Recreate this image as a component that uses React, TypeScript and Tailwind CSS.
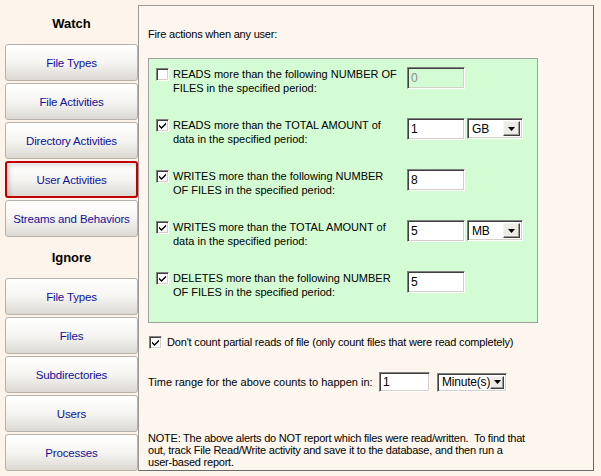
import React from "react";

const Check = () => (
  <svg width="9" height="9" viewBox="0 0 9 9" className="block">
    <path d="M1 3.5 L3.5 6 L8 1.5 L8 3.5 L3.5 8 L1 5.5 Z" fill="#000" />
  </svg>
);

const CheckBox = ({ checked }: { checked: boolean }) => (
  <div className="w-[13px] h-[13px] shrink-0 bg-white border border-t-[#808080] border-l-[#808080] border-b-white border-r-white shadow-[inset_1px_1px_0_#404040,inset_-1px_-1px_0_#d4d0c8] flex items-center justify-center">
    {checked && <Check />}
  </div>
);

const TextBox = ({ value, disabled, w, h }: { value: string; disabled?: boolean; w: string; h: string }) => (
  <div
    className={`${w} ${h} shrink-0 border border-t-[#808080] border-l-[#808080] border-b-white border-r-white shadow-[inset_1px_1px_0_#404040,inset_-1px_-1px_0_#d4d0c8] flex items-center pl-[3px] text-[12px] ${
      disabled ? "bg-[#d4fcd4] text-[#8a8a8a]" : "bg-white text-black"
    }`}
  >
    {value}
  </div>
);

const Combo = ({ value, w, h }: { value: string; w: string; h: string }) => (
  <div
    className={`${w} ${h} shrink-0 bg-white border border-t-[#808080] border-l-[#808080] border-b-white border-r-white shadow-[inset_1px_1px_0_#404040,inset_-1px_-1px_0_#d4d0c8] flex items-stretch p-[2px]`}
  >
    <div className="flex-1 flex items-center pl-[2px] text-[12px] tracking-[-0.2px] text-black">{value}</div>
    <div className="w-[17px] bg-[#ecebe6] border border-t-[#f4f4f4] border-l-[#f4f4f4] border-b-[#404040] border-r-[#404040] shadow-[inset_-1px_-1px_0_#9a9a9a] flex items-center justify-center">
      <svg width="7" height="4" viewBox="0 0 7 4" className="block">
        <path d="M0 0 H7 L3.5 4 Z" fill="#000" />
      </svg>
    </div>
  </div>
);

const NavButton = ({ label, selected }: { label: string; selected?: boolean }) => (
  <div
    className={`h-[37px] w-[133px] rounded-[3px] flex items-center justify-center pt-[2px] text-[11.5px] tracking-[-0.15px] text-[#10109a] bg-gradient-to-b from-white via-[#f6f5f2] to-[#dcd9d3] ${
      selected
        ? "border-2 border-[#c00000] shadow-[inset_3px_3px_4px_rgba(0,0,0,0.12)]"
        : "border border-[#b6b2aa]"
    }`}
  >
    {label}
  </div>
);

const Row = ({
  checked,
  l1,
  l2,
  value,
  disabled,
  unit,
}: {
  checked: boolean;
  l1: string;
  l2: string;
  value: string;
  disabled?: boolean;
  unit?: string;
}) => (
  <div className="h-[52px] flex items-start">
    <div className="mt-[1px]">
      <CheckBox checked={checked} />
    </div>
    <div className="ml-[4px] w-[234px] leading-[14px] text-[11px] text-black">
      {l1}
      <br />
      {l2}
    </div>
    <TextBox value={value} disabled={disabled} w="w-[58px]" h="h-[22px]" />
    {unit && (
      <div className="ml-[2px]">
        <Combo value={unit} w="w-[56px]" h="h-[21px]" />
      </div>
    )}
  </div>
);

export default function App() {
  return (
    <div className="w-[601px] h-[476px] bg-[#fcf4ea] flex font-['Liberation_Sans',Arial,sans-serif] overflow-hidden">
      <div className="w-[138px] shrink-0 pl-[5px] flex flex-col">
        <div className="h-[44px] pt-[3px] flex items-center justify-center font-bold text-[13px] text-black">Watch</div>
        <div className="flex flex-col gap-[2px]">
          <NavButton label="File Types" />
          <NavButton label="File Activities" />
          <NavButton label="Directory Activities" />
          <NavButton label="User Activities" selected />
          <NavButton label="Streams and Behaviors" />
        </div>
        <div className="h-[41px] pt-[1px] flex items-center justify-center font-bold text-[13px] text-black">Ignore</div>
        <div className="flex flex-col gap-[2px]">
          <NavButton label="File Types" />
          <NavButton label="Files" />
          <NavButton label="Subdirectories" />
          <NavButton label="Users" />
          <NavButton label="Processes" />
        </div>
      </div>
      <div className="mt-[5px] w-[456px] h-[466px] shrink-0 bg-[#fdf6ee] border border-t-[#9a9a9a] border-l-[#9a9a9a] border-b-[#6a6a6a] border-r-[#6a6a6a] pl-[9px] flex flex-col text-[11px] text-black">
        <div className="mt-[22px] leading-[13px] tracking-[-0.2px]">Fire actions when any user:</div>
        <div className="mt-[17px] w-[390px] h-[265px] bg-[#d4fcd4] border border-[#a0a0a0] pl-[7px] pt-[8px] flex flex-col">
          <Row checked={false} l1="READS more than the following NUMBER OF" l2="FILES in the specified period:" value="0" disabled />
          <Row checked l1="READS more than the TOTAL AMOUNT of" l2="data in the specified period:" value="1" unit="GB" />
          <Row checked l1="WRITES more than the following NUMBER" l2="OF FILES in the specified period:" value="8" />
          <Row checked l1="WRITES more than the TOTAL AMOUNT of" l2="data in the specified period:" value="5" unit="MB" />
          <Row checked l1="DELETES more than the following NUMBER" l2="OF FILES in the specified period:" value="5" />
        </div>
        <div className="mt-[13px] flex items-center ml-[1px] h-[13px]">
          <CheckBox checked />
          <div className="ml-[5px] leading-[13px] tracking-[-0.18px]">Don't count partial reads of file (only count files that were read completely)</div>
        </div>
        <div className="mt-[23px] flex items-center h-[20px]">
          <div className="w-[231px] leading-[13px]">Time range for the above counts to happen in:</div>
          <TextBox value="1" w="w-[51px]" h="h-[20px]" />
          <div className="ml-[7px]">
            <Combo value="Minute(s)" w="w-[70px]" h="h-[19px]" />
          </div>
        </div>
        <div className="mt-[40px] leading-[12px] tracking-[-0.23px]">
          NOTE: The above alerts do NOT report which files were read/written.&nbsp; To find that
          <br />
          out, track File Read/Write activity and save it to the database, and then run a
          <br />
          user-based report.
        </div>
      </div>
    </div>
  );
}
